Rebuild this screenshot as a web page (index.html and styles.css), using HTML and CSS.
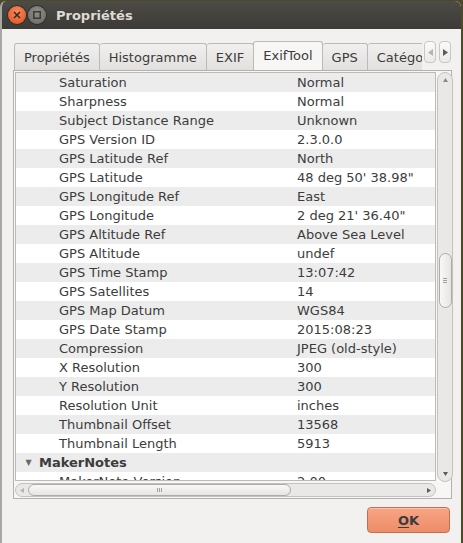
FILE: index.html
```html
<!DOCTYPE html>
<html lang="fr">
<head>
  <meta charset="UTF-8" />
  <title>Propriétés</title>
  <link rel="stylesheet" href="styles.css">
</head>
<body>
  <div class="window">
    <div class="titlebar">
      <span class="wbtn close">
        <svg width="8" height="8" viewBox="0 0 8 8"><path d="M1 1L7 7M7 1L1 7" stroke="#3b2a22" stroke-width="1.6"/></svg>
      </span>
      <span class="wbtn mini">
        <svg width="8" height="8" viewBox="0 0 8 8"><rect x="0.75" y="0.75" width="6.5" height="6.5" fill="none" stroke="#3b3a36" stroke-width="1.5"/></svg>
      </span>
      <span class="title">Propriétés</span>
    </div>

    <div class="content">
      <div class="tabbar">
        <div class="tabs">
          <div class="tab">Propriétés</div>
          <div class="tab">Histogramme</div>
          <div class="tab">EXIF</div>
          <div class="tab active">ExifTool</div>
          <div class="tab">GPS</div>
          <div class="tab">Catégories</div>
        </div>
        <div class="tab-arrows">
          <span class="tarrow dim">
            <svg width="5" height="7" viewBox="0 0 5 7"><path d="M5 0L0 3.5L5 7Z" fill="#b5b3b0"/></svg>
          </span>
          <span class="tarrow">
            <svg width="5" height="7" viewBox="0 0 5 7"><path d="M0 0L5 3.5L0 7Z" fill="#5d5c59"/></svg>
          </span>
        </div>
      </div>

      <div class="panel">
        <div class="list" id="list"></div>

        <div class="vscroll">
          <span class="arrow">
            <svg width="5" height="4" viewBox="0 0 5 4"><path d="M0 4L2.5 0L5 4Z" fill="#8c8a87"/></svg>
          </span>
          <div class="vthumb"><span class="grip"></span></div>
          <span class="arrow bottom">
            <svg width="5" height="4" viewBox="0 0 5 4"><path d="M0 0L2.5 4L5 0Z" fill="#5d5c59"/></svg>
          </span>
        </div>

        <div class="hscroll">
          <span class="arrow">
            <svg width="4" height="5" viewBox="0 0 4 5"><path d="M4 0L0 2.5L4 5Z" fill="#b5b3b0"/></svg>
          </span>
          <div class="hthumb"><span class="grip"></span></div>
          <span class="arrow right">
            <svg width="4" height="5" viewBox="0 0 4 5"><path d="M0 0L4 2.5L0 5Z" fill="#5d5c59"/></svg>
          </span>
        </div>
      </div>

      <div class="actions">
        <button class="ok"><u>O</u>K</button>
      </div>
    </div>
  </div>

  <script>
    const rows = [
      ['Saturation', 'Normal'],
      ['Sharpness', 'Normal'],
      ['Subject Distance Range', 'Unknown'],
      ['GPS Version ID', '2.3.0.0'],
      ['GPS Latitude Ref', 'North'],
      ['GPS Latitude', '48 deg 50\' 38.98"'],
      ['GPS Longitude Ref', 'East'],
      ['GPS Longitude', '2 deg 21\' 36.40"'],
      ['GPS Altitude Ref', 'Above Sea Level'],
      ['GPS Altitude', 'undef'],
      ['GPS Time Stamp', '13:07:42'],
      ['GPS Satellites', '14'],
      ['GPS Map Datum', 'WGS84'],
      ['GPS Date Stamp', '2015:08:23'],
      ['Compression', 'JPEG (old-style)'],
      ['X Resolution', '300'],
      ['Y Resolution', '300'],
      ['Resolution Unit', 'inches'],
      ['Thumbnail Offset', '13568'],
      ['Thumbnail Length', '5913'],
      ['MakerNotes', null],
      ['MakerNote Version', '2.00']
    ];

    const list = document.getElementById('list');
    rows.forEach(([key, value]) => {
      const row = document.createElement('div');
      if (value === null) {
        row.className = 'row group';
        row.innerHTML = '<span class="key"><span class="caret">&#9660;</span>' + key + '</span><span class="val"></span>';
      } else {
        row.className = 'row';
        const k = document.createElement('span');
        k.className = 'key';
        k.textContent = key;
        const v = document.createElement('span');
        v.className = 'val';
        v.textContent = value;
        row.append(k, v);
      }
      list.appendChild(row);
    });
  </script>
</body>
</html>
```

FILE: styles.css
```css
* {
  box-sizing: border-box;
}
html,
body {
  margin: 0;
}
body {
  width: 463px;
  height: 543px;
  overflow: hidden;
  background: #4d4a2c;
  font-family: 'DejaVu Sans', 'Open Sans', sans-serif;
  font-size: 13px;
  color: #3c3c3c;
}

.window {
  width: 461px;
  height: 542px;
  margin-top: 1px;
  border-radius: 6px 6px 0 0;
  border-left: 2px solid #a9a7a3;
  background: #f2f1f0;
  overflow: hidden;
  display: flex;
  flex-direction: column;
}

/* title bar */
.titlebar {
  height: 28px;
  flex-shrink: 0;
  background: linear-gradient(#4c4b46, #3c3b37);
  display: flex;
  align-items: center;
  padding-left: 6px;
  gap: 2px;
}
.wbtn {
  width: 18px;
  height: 18px;
  border-radius: 50%;
  display: flex;
  align-items: center;
  justify-content: center;
}
.wbtn.close {
  background: radial-gradient(circle at 50% 35%, #f68b5c, #df4d1c);
  box-shadow: 0 0 0 1px #332f2a;
}
.wbtn.mini {
  background: radial-gradient(circle at 50% 35%, #8f8d88, #6a6863);
  box-shadow: 0 0 0 1px #332f2a;
}
.title {
  margin-left: 8px;
  font-weight: 700;
  color: #dfdbd2;
  font-size: 13px;
}

/* body */
.content {
  flex: 1;
  padding: 12px 10px 0 11px;
  display: flex;
  flex-direction: column;
}

.tabbar {
  display: flex;
  align-items: flex-end;
  height: 29px;
  position: relative;
  z-index: 1;
}
.tabs {
  display: flex;
  align-items: flex-end;
  width: 408px;
  margin-left: 1px;
  overflow: hidden;
  flex-shrink: 0;
}
.tab {
  height: 27px;
  padding: 0 9px;
  border: 1px solid #bcbab6;
  border-bottom: none;
  border-left: none;
  border-radius: 3px 3px 0 0;
  background: linear-gradient(#f1f0ef, #e1e0de);
  display: flex;
  align-items: center;
  white-space: nowrap;
  flex-shrink: 0;
}
.tab:first-child {
  border-left: 1px solid #bcbab6;
}
.tab.active {
  height: 30px;
  margin-bottom: -1px;
  padding-bottom: 3px;
  background: #f7f6f5;
  border-left: 1px solid #bcbab6;
  margin-left: -1px;
}
.tab-arrows {
  display: flex;
  gap: 3px;
  margin-left: 2px;
  margin-bottom: 7px;
}
.tarrow {
  width: 12px;
  height: 22px;
  border: 1px solid #c9c7c3;
  border-radius: 4px;
  background: linear-gradient(#fafafa, #ebeae8);
  display: flex;
  align-items: center;
  justify-content: center;
}

.panel {
  width: 439px;
  height: 429px;
  border: 1px solid #b3b1ad;
  background: #f7f6f5;
  padding: 1px;
  display: grid;
  grid-template-columns: 1fr 16px;
  grid-template-rows: 1fr 14px;
  column-gap: 1px;
  row-gap: 2px;
}

.list {
  border: 1px solid #bdbbb8;
  background: #fff;
  overflow: hidden;
}
.row {
  display: grid;
  grid-template-columns: 281px 1fr;
  height: 19px;
  line-height: 19px;
  white-space: nowrap;
}
.row:nth-child(odd) {
  background: #ececec;
}
.row .key {
  padding-left: 43px;
}
.row.group .key {
  padding-left: 9px;
  font-weight: 700;
}
.caret {
  display: inline-block;
  width: 7px;
  margin-right: 7px;
  font-size: 8px;
  color: #6a6966;
  text-align: center;
  vertical-align: top;
}

/* scrollbars */
.vscroll {
  grid-row: 1 / 3;
  grid-column: 2;
  height: 410px;
  border: 1px solid #c4c2bf;
  border-radius: 8px;
  background: #e9e8e6;
  display: flex;
  flex-direction: column;
  align-items: center;
}
.vscroll .arrow {
  height: 14px;
  display: flex;
  align-items: center;
}
.vscroll .arrow.bottom {
  margin-top: auto;
}
.vthumb {
  width: 13px;
  height: 55px;
  margin-top: 166px;
  border: 1px solid #adaba7;
  border-radius: 7px;
  background: linear-gradient(90deg, #f8f8f7, #e6e5e3);
  display: flex;
  align-items: center;
  justify-content: center;
}
.vthumb .grip {
  width: 4px;
  height: 5px;
  border-top: 1px solid #a3a19d;
  border-bottom: 1px solid #a3a19d;
  position: relative;
}
.vthumb .grip::after {
  content: "";
  position: absolute;
  left: 0;
  right: 0;
  top: 1px;
  border-top: 1px solid #a3a19d;
}

.hscroll {
  grid-row: 2;
  grid-column: 1;
  width: 421px;
  border: 1px solid #c4c2bf;
  border-radius: 7px;
  background: #e9e8e6;
  display: flex;
  align-items: center;
}
.hscroll .arrow {
  width: 12px;
  display: flex;
  justify-content: center;
}
.hscroll .arrow.right {
  margin-left: auto;
}
.hthumb {
  width: 263px;
  height: 12px;
  border: 1px solid #adaba7;
  border-radius: 6px;
  background: linear-gradient(#f8f8f7, #e6e5e3);
  display: flex;
  align-items: center;
  justify-content: center;
}
.hthumb .grip {
  width: 5px;
  height: 4px;
  border-left: 1px solid #a3a19d;
  border-right: 1px solid #a3a19d;
  position: relative;
}
.hthumb .grip::after {
  content: "";
  position: absolute;
  top: 0;
  bottom: 0;
  left: 1px;
  border-left: 1px solid #a3a19d;
}

/* dialog buttons */
.actions {
  display: flex;
  justify-content: flex-end;
  padding: 8px 1px 0 0;
}
button.ok {
  width: 83px;
  height: 26px;
  border: 1px solid #c0704f;
  border-radius: 4px;
  background: linear-gradient(#f7a585, #ee8c68);
  font-family: inherit;
  font-size: 13px;
  font-weight: 700;
  color: #3c3c3c;
  box-shadow: inset 0 1px 0 rgba(255, 255, 255, 0.35);
}
button.ok u {
  text-decoration-thickness: 1px;
  text-underline-offset: 2px;
}
```
